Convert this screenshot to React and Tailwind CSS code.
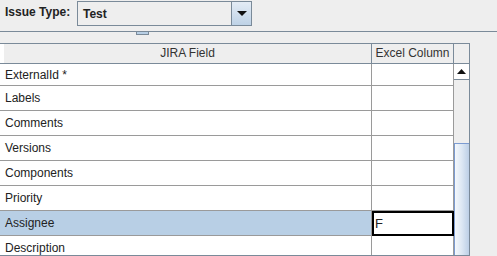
const rows = [
  { field: "ExternalId *", col: "", h: "h-[22px]" },
  { field: "Labels", col: "", h: "h-[25px]" },
  { field: "Comments", col: "", h: "h-[25px]" },
  { field: "Versions", col: "", h: "h-[25px]" },
  { field: "Components", col: "", h: "h-[25px]" },
  { field: "Priority", col: "", h: "h-[25px]" },
  { field: "Assignee", col: "F", h: "h-[25px]", selected: true },
  { field: "Description", col: "", h: "h-[25px]" },
];

export default function App() {
  return (
    <div className="w-[497px] h-[256px] overflow-hidden bg-[#eeeeee] text-[12px] text-[#222] font-['Liberation_Sans',Arial,sans-serif]">
      {/* Issue type bar */}
      <div className="flex h-[32px] items-start border-b border-[#7a8a99]">
        <div className="w-[77px] pl-[5px] pt-[5px] font-bold leading-[15px]">Issue Type:</div>
        <div className="mt-[1px] flex h-[25px] w-[175px] border border-[#7a8a99] bg-[#eeeeee]">
          <div className="flex flex-1 items-center pl-[5px] font-bold">Test</div>
          <div className="flex w-[20px] items-center justify-center border-l border-[#7a8a99] bg-gradient-to-b from-[#e4ecf5] to-[#bed2e6]">
            <svg width="10" height="5" viewBox="0 0 10 5">
              <path d="M0 0h10L5 5z" fill="#111" />
            </svg>
          </div>
        </div>
      </div>

      {/* Split divider */}
      <div className="h-[11px]">
        <div className="ml-[136px] h-[3px] w-[13px] border-x border-b border-[#7a8a99] bg-[#b8cfe5]" />
      </div>

      {/* Table */}
      <div className="h-[213px] w-[470px] overflow-hidden border-t border-r border-b border-[#7a8a99] bg-white">
        {/* Header */}
        <div className="flex h-[20px] border-b border-[#7a8a99]">
          <div className="w-[4px] bg-white" />
          <div className="w-[368px] border-r border-[#7a8a99] bg-[#eeeeee] text-center leading-[19px] text-[#333]">JIRA Field</div>
          <div className="w-[82px] border-r border-[#7a8a99] bg-[#eeeeee] text-center leading-[19px] text-[#333]">Excel Column</div>
          <div className="w-[15px] bg-[#eeeeee]" />
        </div>

        <div className="flex">
          {/* Rows */}
          <div className="w-[454px]">
            {rows.map((r) => (
              <div key={r.field} className={`flex ${r.h}`}>
                <div
                  className={`flex w-[372px] items-center border-r border-b border-[#9a9a9a] pl-[5px] ${
                    r.selected ? "bg-[#b8cfe5]" : "bg-white"
                  }`}
                >
                  {r.field}
                </div>
                {r.selected ? (
                  <div className="flex w-[82px] items-center border-2 border-black bg-white pl-[1px] text-[13px]">
                    {r.col}
                  </div>
                ) : (
                  <div className="w-[82px] border-r border-b border-[#9a9a9a] bg-white" />
                )}
              </div>
            ))}
          </div>

          {/* Scrollbar */}
          <div className="flex w-[15px] flex-col bg-[#eeeeee]">
            <div className="flex h-[16px] items-center justify-center border-b border-[#7a8a99] bg-white">
              <svg width="9" height="5" viewBox="0 0 9 5">
                <path d="M4.5 0L9 5H0z" fill="#111" />
              </svg>
            </div>
            <div className="h-[63px]" />
            <div className="h-[120px] border-t border-l border-[#7b9bd1] bg-gradient-to-r from-[#f4f8fc] via-[#dce7f3] to-[#bccfe6]" />
          </div>
        </div>
      </div>
    </div>
  );
}
